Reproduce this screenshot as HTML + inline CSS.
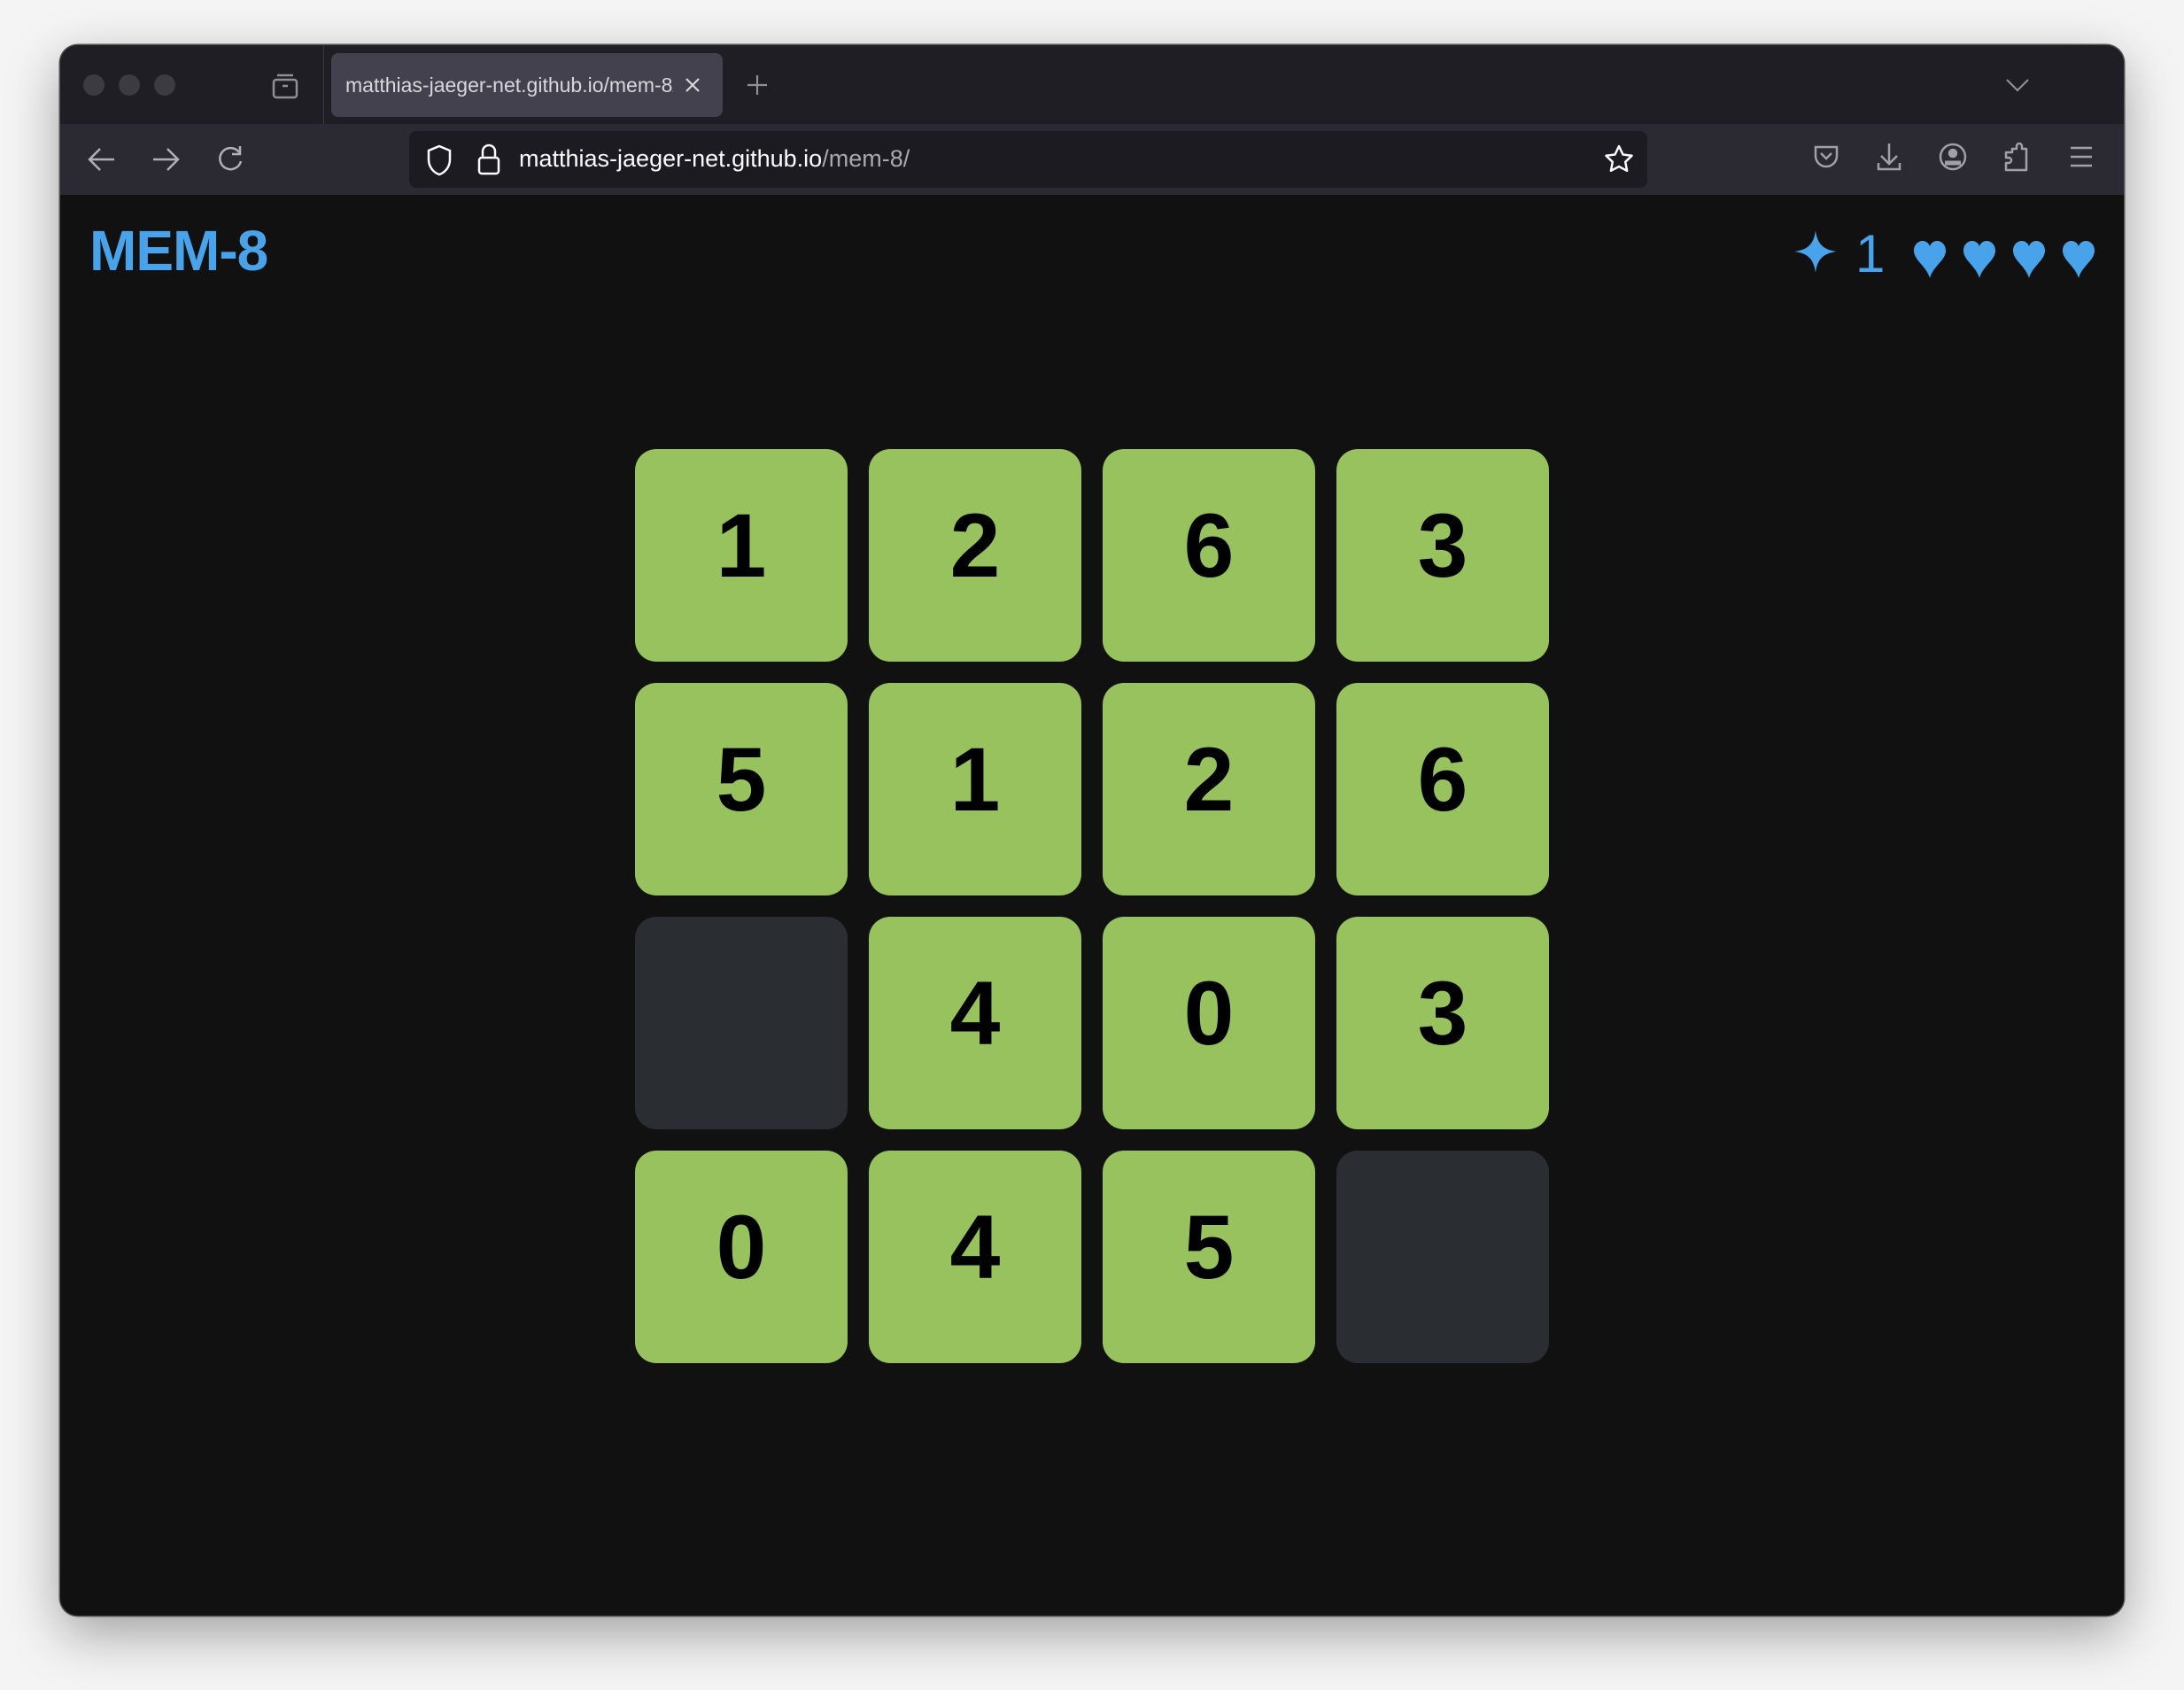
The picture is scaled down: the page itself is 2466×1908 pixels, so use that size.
<!DOCTYPE html>
<html><head><meta charset="utf-8"><style>
*{margin:0;padding:0;box-sizing:border-box}
body{width:2466px;height:1908px;background:#f4f4f4;position:relative;overflow:hidden;font-family:"Liberation Sans",Arial,sans-serif}
.win{position:absolute;left:68px;top:51px;width:2330px;height:1773px;border-radius:20px;overflow:hidden;background:#111;box-shadow:0 0 0 1.5px #555,0 20px 60px rgba(0,0,0,.35)}
.tabbar{position:absolute;left:0;top:0;width:100%;height:89px;background:#1f1e25}
.toolbar{position:absolute;left:0;top:89px;width:100%;height:80px;background:#2b2a33}
.dot{position:absolute;top:33px;width:24px;height:24px;border-radius:50%;background:#3c3b41}
.tab{position:absolute;left:306px;top:9px;width:442px;height:72px;background:#42414d;border-radius:8px}
.tab span{position:absolute;left:16px;top:23px;font-size:23px;color:#d8d8dc;white-space:nowrap;width:370px;overflow:hidden}
.url{position:absolute;left:394px;top:8px;width:1398px;height:64px;background:#1c1b22;border-radius:8px}
.url .t{position:absolute;left:124px;top:16px;font-size:27px;color:#fbfbfe;white-space:nowrap}
.url .t i{font-style:normal;color:#a8a8ae}
svg{position:absolute}
.title{position:absolute;left:33px;font-size:64px;font-weight:bold;color:#48a3ea;letter-spacing:-1px}
.tile{position:absolute;width:240px;height:240px;border-radius:24px;background:#97c25d;color:#000;font-weight:bold;font-size:102px;text-align:center;line-height:218px}
.e{background:#2a2e32}
</style></head><body>
<div class="win">
 <div class="tabbar">
  <div class="dot" style="left:26px"></div><div class="dot" style="left:66px"></div><div class="dot" style="left:106px"></div>
  <svg style="left:238px;top:30px" width="32" height="32" viewBox="0 0 32 32" fill="none" stroke="#8f8f95" stroke-width="2.5"><rect x="3" y="9" width="26" height="20" rx="3"/><path d="M7 4h18M13 16h6"/></svg>
  <div style="position:absolute;left:297px;top:0;width:1px;height:89px;background:#3a3940"></div>
  <div class="tab"><span>matthias-jaeger-net.github.io/mem-8/</span>
   <svg style="left:398px;top:26px" width="20" height="20" viewBox="0 0 20 20" stroke="#d8d8dc" stroke-width="2.2"><path d="M3 3L17 17M17 3L3 17"/></svg></div>
  <svg style="left:774px;top:32px" width="26" height="26" viewBox="0 0 26 26" stroke="#8f8f95" stroke-width="2.2"><path d="M13 2v22M2 13h22"/></svg>
  <svg style="left:2196px;top:36px" width="28" height="18" viewBox="0 0 28 18" fill="none" stroke="#8f8f95" stroke-width="2.2"><path d="M2 3l12 12L26 3"/></svg>
 </div>
 <div class="toolbar">
  <svg style="left:30px;top:24px" width="34" height="32" viewBox="0 0 34 32" fill="none" stroke="#b0b0b6" stroke-width="2.5"><path d="M31 16H4M15 4L3 16l12 12"/></svg>
  <svg style="left:102px;top:24px" width="34" height="32" viewBox="0 0 34 32" fill="none" stroke="#b0b0b6" stroke-width="2.5"><path d="M3 16h27M19 4l12 12-12 12"/></svg>
  <svg style="left:176px;top:22px" width="32" height="34" viewBox="0 0 32 34" fill="none" stroke="#b0b0b6" stroke-width="2.5"><path d="M26 10A12 12 0 1 0 28 20"/><path d="M27 3v9h-9"/></svg>
  <div class="url">
   <svg style="left:18px;top:14px" width="32" height="38" viewBox="0 0 32 38" fill="none" stroke="#fbfbfe" stroke-width="2.5"><path d="M16 3l12 5v10c0 9-6 15-12 17C10 33 4 27 4 18V8z"/></svg>
   <svg style="left:76px;top:12px" width="28" height="40" viewBox="0 0 28 40" fill="none" stroke="#fbfbfe" stroke-width="2.5"><path d="M7 18v-7a7 7 0 0 1 14 0v7"/><rect x="3" y="18" width="22" height="18" rx="3"/></svg>
   <div class="t">matthias-jaeger-net.github.io<i>/mem-8/</i></div>
   <svg style="left:1348px;top:14px" width="36" height="36" viewBox="0 0 36 36" fill="none" stroke="#fbfbfe" stroke-width="2.5" stroke-linejoin="round"><path d="M18 3l4.5 9.5 10 1.3-7.3 7 1.9 10L18 26l-9.1 4.8 1.9-10-7.3-7 10-1.3z"/></svg>
  </div>
  <svg style="left:1979px;top:22px" width="30" height="30" viewBox="0 0 30 30" fill="none" stroke="#a0a0a6" stroke-width="2.5"><path d="M3 4h24v10a12 12 0 0 1-24 0z"/><path d="M9 11l6 6 6-6"/></svg>
  <svg style="left:2050px;top:20px" width="30" height="34" viewBox="0 0 30 34" fill="none" stroke="#a0a0a6" stroke-width="2.5"><path d="M15 2v22M6 16l9 9 9-9M3 24v7h24v-7"/></svg>
  <svg style="left:2120px;top:20px" width="34" height="34" viewBox="0 0 34 34" fill="none" stroke="#a0a0a6" stroke-width="2.5"><circle cx="17" cy="17" r="14"/><circle cx="17" cy="13" r="4" fill="#a0a0a6"/><path d="M8 24h18" stroke-width="5"/></svg>
  <svg style="left:2194px;top:20px" width="30" height="34" viewBox="0 0 30 34" fill="none" stroke="#a0a0a6" stroke-width="2.5" stroke-linejoin="round"><path d="M10 8h5V5a3 3 0 0 1 6 0v3h5v24H3v-8h3a3 3 0 0 0 0-6H3v-6h7z"/></svg>
  <svg style="left:2268px;top:24px" width="28" height="26" viewBox="0 0 28 26" stroke="#a0a0a6" stroke-width="2.5"><path d="M2 3h24M2 13h24M2 23h24"/></svg>
 </div>
 <div style="position:absolute;left:0;top:169px;width:100%;height:1604px;background:#111">
  <div class="title" style="top:26px">MEM-8</div>
  <svg style="left:1958px;top:40px" width="48" height="48" viewBox="0 0 50 50"><path d="M25 0C27 16 34 23 50 25 34 27 27 34 25 50 23 34 16 27 0 25 16 23 23 16 25 0z" fill="#48a3ea"/></svg>
  <div style="position:absolute;left:2027px;top:32px;font-size:60px;color:#48a3ea">1</div>
  <svg style="left:2093px;top:52px" width="230" height="42" viewBox="0 0 230 42" fill="#48a3ea">
   <path id="h" d="M18 42C14 28 0 22 0 11 0 4 5 0 10 0c4 0 7 3 8 6 1-3 4-6 8-6 5 0 10 4 10 11 0 11-14 17-18 31z"/>
   <use href="#h" x="56"/><use href="#h" x="112"/><use href="#h" x="168"/>
  </svg>
 </div>
</div>
<div class="tile" style="left:717px;top:507px">1</div>
<div class="tile" style="left:981px;top:507px">2</div>
<div class="tile" style="left:1245px;top:507px">6</div>
<div class="tile" style="left:1509px;top:507px">3</div>
<div class="tile" style="left:717px;top:771px">5</div>
<div class="tile" style="left:981px;top:771px">1</div>
<div class="tile" style="left:1245px;top:771px">2</div>
<div class="tile" style="left:1509px;top:771px">6</div>
<div class="tile e" style="left:717px;top:1035px"></div>
<div class="tile" style="left:981px;top:1035px">4</div>
<div class="tile" style="left:1245px;top:1035px">0</div>
<div class="tile" style="left:1509px;top:1035px">3</div>
<div class="tile" style="left:717px;top:1299px">0</div>
<div class="tile" style="left:981px;top:1299px">4</div>
<div class="tile" style="left:1245px;top:1299px">5</div>
<div class="tile e" style="left:1509px;top:1299px"></div>
</body></html>
